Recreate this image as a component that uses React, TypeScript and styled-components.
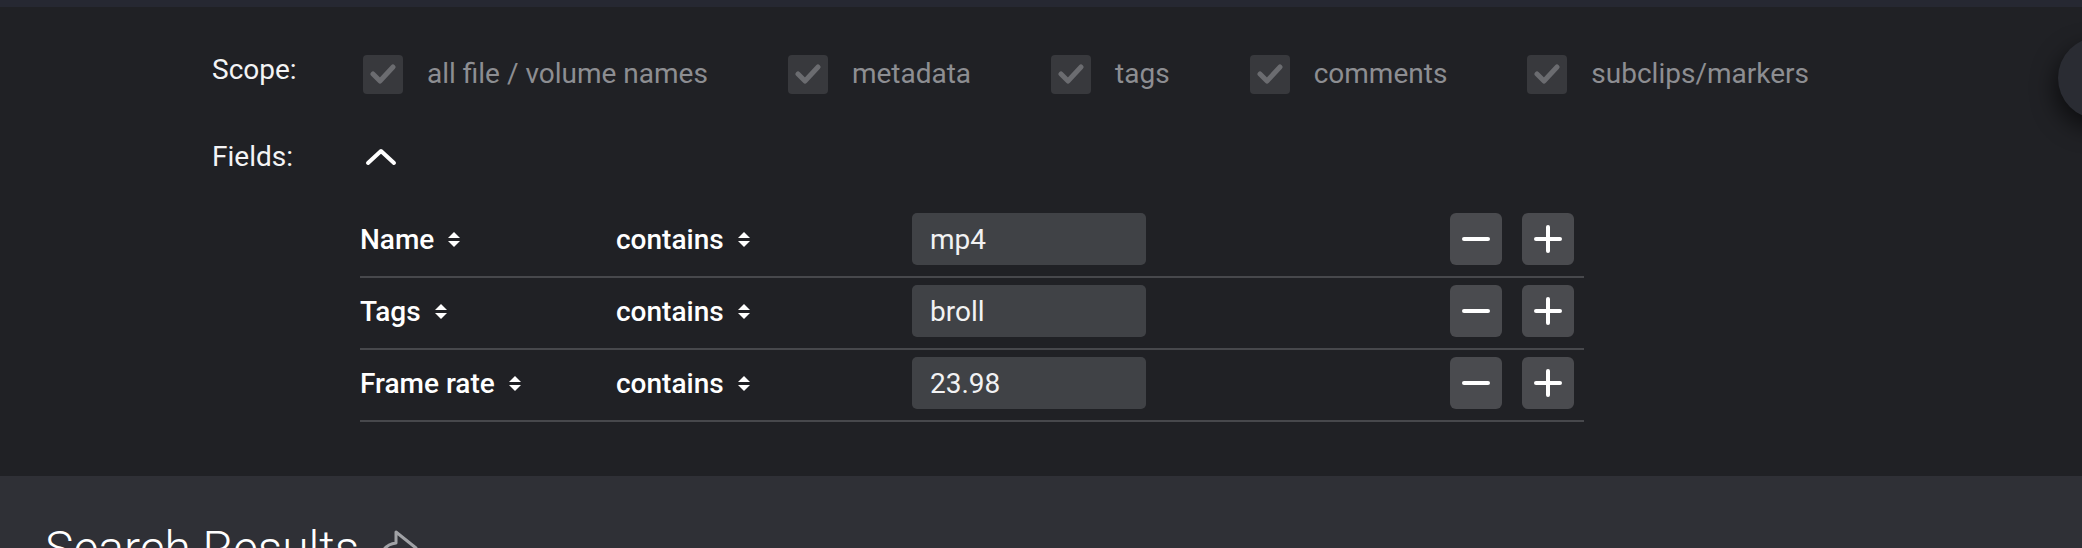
import * as React from "react";
import styled, { createGlobalStyle } from "styled-components";

type FieldRow = {
  field: string;
  operator: string;
  value: string;
};

const scopes = [
  "all file / volume names",
  "metadata",
  "tags",
  "comments",
  "subclips/markers",
];

const rows: FieldRow[] = [
  { field: "Name", operator: "contains", value: "mp4" },
  { field: "Tags", operator: "contains", value: "broll" },
  { field: "Frame rate", operator: "contains", value: "23.98" },
];

const GlobalStyle = createGlobalStyle`
  html, body {
    margin: 0;
    padding: 0;
    background: #2f3036;
    overflow: hidden;
  }
  body {
    font-family: Roboto, "Liberation Sans", sans-serif;
  }
`;

const CheckIcon = () => (
  <svg width="26" height="20" viewBox="0 0 26 20">
    <polyline
      points="3,10 10,17 23,3"
      fill="none"
      stroke="#6b6c70"
      strokeWidth="5"
      strokeLinecap="round"
      strokeLinejoin="round"
    />
  </svg>
);

const SortIcon = () => (
  <svg width="12" height="15" viewBox="0 0 12 15">
    <polygon points="6,0 12,6 0,6" fill="#ffffff" />
    <polygon points="0,9 12,9 6,15" fill="#ffffff" />
  </svg>
);

const MinusIcon = () => (
  <svg width="28" height="28" viewBox="0 0 28 28">
    <line x1="2" y1="14" x2="26" y2="14" stroke="#fff" strokeWidth="4" strokeLinecap="round" />
  </svg>
);

const PlusIcon = () => (
  <svg width="28" height="28" viewBox="0 0 28 28">
    <line x1="2" y1="14" x2="26" y2="14" stroke="#fff" strokeWidth="4" strokeLinecap="round" />
    <line x1="14" y1="2" x2="14" y2="26" stroke="#fff" strokeWidth="4" strokeLinecap="round" />
  </svg>
);

const ChevronUp = () => (
  <svg width="32" height="18" viewBox="0 0 32 18">
    <polyline
      points="3,15 16,3 29,15"
      fill="none"
      stroke="#fff"
      strokeWidth="4"
      strokeLinecap="round"
      strokeLinejoin="round"
    />
  </svg>
);

// only the upper part of this icon is visible in the frame
const ShareIcon = () => (
  <svg width="44" height="40" viewBox="0 0 44 40">
    <path
      d="M3 37 C4 23 11 15 21 14 L21 3 L41 19 L21 35 L21 25 C14 25 8 29 3 37 Z"
      fill="none"
      stroke="#a1a2a6"
      strokeWidth="3"
      strokeLinejoin="round"
    />
  </svg>
);

export default function App() {
  return (
    <>
      <GlobalStyle />
      <StyledTopStrip />
      <StyledPanel>
        <StyledScopeRow>
          <StyledLabel>Scope:</StyledLabel>
          <StyledScopeList>
            {scopes.map((scope) => (
              <StyledScopeItem key={scope}>
                <StyledCheckbox>
                  <CheckIcon />
                </StyledCheckbox>
                <StyledScopeText>{scope}</StyledScopeText>
              </StyledScopeItem>
            ))}
          </StyledScopeList>
        </StyledScopeRow>
        <StyledFieldsRow>
          <StyledLabel>Fields:</StyledLabel>
          <StyledToggle>
            <ChevronUp />
          </StyledToggle>
        </StyledFieldsRow>
        <StyledTable>
          {rows.map((row) => (
            <StyledRow key={row.field}>
              <StyledSelect>
                {row.field}
                <SortIcon />
              </StyledSelect>
              <StyledSelect>
                {row.operator}
                <SortIcon />
              </StyledSelect>
              <StyledInput>{row.value}</StyledInput>
              <span />
              <StyledButtons>
                <StyledIconButton>
                  <MinusIcon />
                </StyledIconButton>
                <StyledIconButton>
                  <PlusIcon />
                </StyledIconButton>
              </StyledButtons>
            </StyledRow>
          ))}
        </StyledTable>
        <StyledFab />
      </StyledPanel>
      <StyledResults>
        <StyledResultsTitle>Search Results</StyledResultsTitle>
        <StyledShare>
          <ShareIcon />
        </StyledShare>
      </StyledResults>
    </>
  );
}

const StyledTopStrip = styled.div`
  height: 7px;
  background: #262832;
`;

const StyledPanel = styled.div`
  position: relative;
  overflow: hidden;
  height: 469px;
  box-sizing: border-box;
  padding: 47px 0 0 212px;
  background: #202125;
`;

const StyledScopeRow = styled.div`
  display: flex;
  align-items: flex-start;
`;

const StyledLabel = styled.div`
  width: 151px;
  flex-shrink: 0;
  font-size: 28px;
  line-height: 32px;
  color: #f4f4f5;
`;

const StyledScopeList = styled.div`
  display: flex;
  gap: 80px;
`;

const StyledScopeItem = styled.div`
  display: flex;
  align-items: center;
  gap: 24px;
  height: 40px;
`;

const StyledCheckbox = styled.div`
  width: 40px;
  height: 39px;
  border-radius: 4px;
  background: #38393d;
  display: flex;
  align-items: center;
  justify-content: center;
`;

const StyledScopeText = styled.span`
  font-size: 28px;
  line-height: 32px;
  color: #8d8e92;
`;

const StyledFieldsRow = styled.div`
  display: flex;
  align-items: center;
  margin-top: 47px;
`;

const StyledToggle = styled.div`
  display: flex;
  margin-left: 2px;
`;

const StyledTable = styled.div`
  margin: 33px 0 0 148px;
  width: 1224px;
`;

const StyledRow = styled.div`
  display: grid;
  grid-template-columns: 256px 296px 234px 1fr auto;
  align-items: center;
  padding: 7px 10px 11px 0;
  border-bottom: 2px solid #47484c;
`;

const StyledSelect = styled.div`
  display: flex;
  align-items: center;
  gap: 14px;
  font-size: 28px;
  font-weight: 500;
  color: #ffffff;
`;

const StyledInput = styled.div`
  height: 52px;
  box-sizing: border-box;
  padding-left: 18px;
  border-radius: 5px;
  background: #404246;
  display: flex;
  align-items: center;
  font-size: 28px;
  color: #f2f2f3;
`;

const StyledButtons = styled.div`
  display: flex;
  gap: 20px;
`;

const StyledIconButton = styled.div`
  width: 52px;
  height: 52px;
  border-radius: 6px;
  background: #4a4b4f;
  display: flex;
  align-items: center;
  justify-content: center;
`;

const StyledFab = styled.div`
  position: absolute;
  top: 30px;
  right: -58px;
  width: 82px;
  height: 82px;
  border-radius: 50%;
  background: #2a2c33;
  box-shadow: -4px 10px 22px rgba(0, 0, 0, 0.55);
`;

const StyledResults = styled.div`
  display: flex;
  align-items: flex-start;
  gap: 16px;
  padding: 44px 0 0 45px;
  background: #2f3036;
  height: 200px;
`;

const StyledResultsTitle = styled.h2`
  margin: 0;
  font-size: 48px;
  font-weight: 300;
  line-height: 1.2;
  color: #ffffff;
`;

const StyledShare = styled.div`
  display: flex;
  margin-top: 9px;
`;
